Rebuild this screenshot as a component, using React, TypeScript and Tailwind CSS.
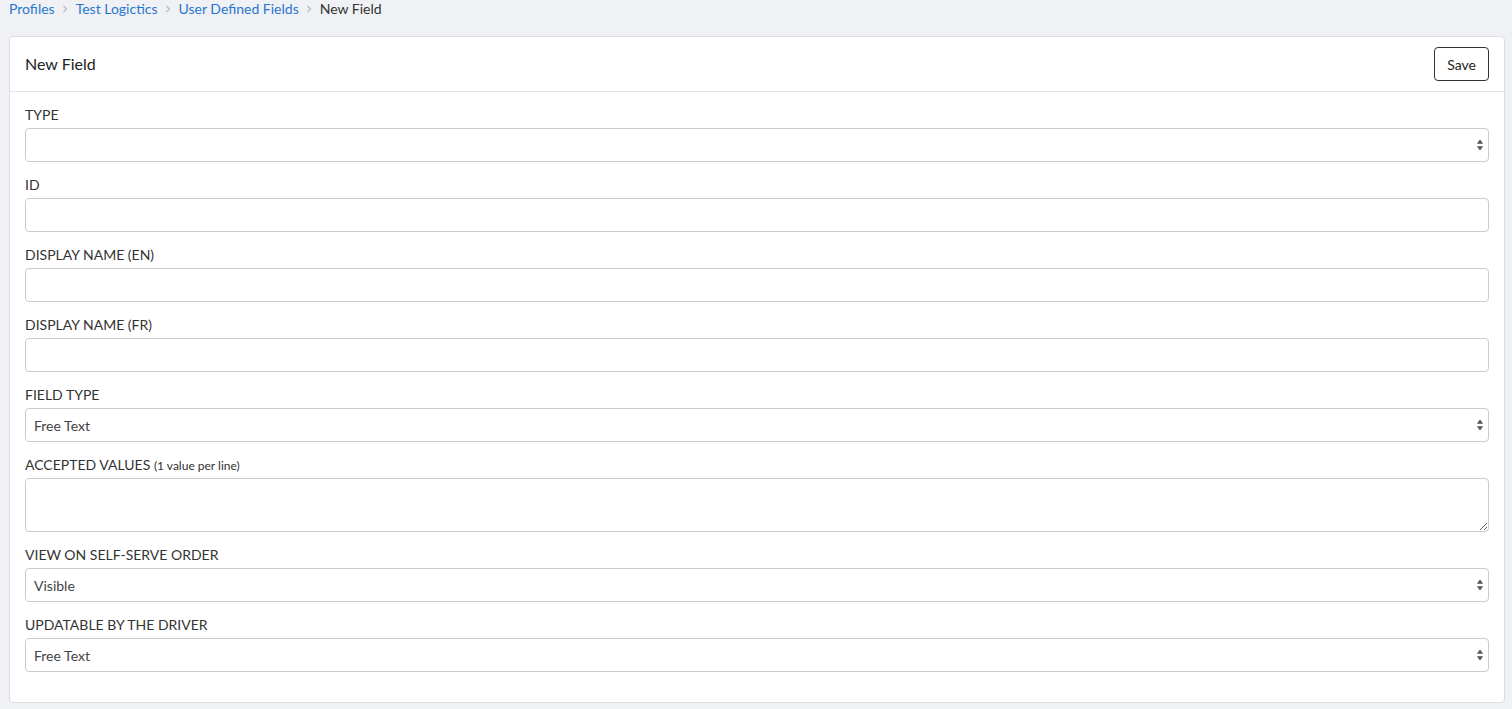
import type { ReactNode } from 'react';

function Chevron() {
  return (
    <svg width="8" height="8" viewBox="0 0 8 8" className="mx-[6.5px]">
      <path d="M2.5 1 L5.5 4 L2.5 7" fill="none" stroke="#b5b8bf" strokeWidth="1.1" />
    </svg>
  );
}

function SelectArrows() {
  return (
    <svg width="8" height="13" viewBox="0 0 8 13" className="absolute right-[4px] top-1/2 -translate-y-1/2 pointer-events-none">
      <path d="M4 1 L7.2 5.3 L0.8 5.3 Z" fill="#555" />
      <path d="M4 12 L7.2 7.7 L0.8 7.7 Z" fill="#555" />
    </svg>
  );
}

function Field({ label, children }: { label: ReactNode; children: ReactNode }) {
  return (
    <div className="mb-[13px]">
      <div className="h-5 leading-5 mb-[3px] text-[14px] text-[#333]">{label}</div>
      {children}
    </div>
  );
}

function Select({ value }: { value?: string }) {
  return (
    <div className="relative h-[34px] border border-[#cbcbcb] rounded-[4px] bg-white flex items-center px-[8px] text-[14px] text-[#444]">
      {value}
      <SelectArrows />
    </div>
  );
}

function Input() {
  return <input className="block w-full h-[34px] border border-[#cbcbcb] rounded-[4px] bg-white px-[8px] text-[14px] outline-none" />;
}

export default function App() {
  return (
    <div className="min-h-screen bg-[#f0f1f5] font-['Lato','Open_Sans',sans-serif] pb-[7px]">
      <div className="flex items-center h-[17px] pl-[9px] text-[14px] leading-[17px]">
        <a className="text-[#2877cf]">Profiles</a>
        <Chevron />
        <a className="text-[#2877cf]">Test Logictics</a>
        <Chevron />
        <a className="text-[#2877cf]">User Defined Fields</a>
        <Chevron />
        <span className="text-[#333]">New Field</span>
      </div>

      <div className="mt-[19px] ml-[9px] mr-[7px] bg-white border border-[#dcdde1] rounded-[4px]">
        <div className="flex items-center justify-between h-[55px] pl-[15px] pr-[15px] border-b border-[#e3e4e8]">
          <h1 className="text-[16px] text-[#222]">New Field</h1>
          <button className="h-[34px] px-[12px] border border-[#333] rounded-[4px] text-[14px] text-[#222] bg-white">Save</button>
        </div>

        <div className="px-[15px] pt-[13px] pb-[17px]">
          <Field label="TYPE">
            <Select />
          </Field>
          <Field label="ID">
            <Input />
          </Field>
          <Field label="DISPLAY NAME (EN)">
            <Input />
          </Field>
          <Field label="DISPLAY NAME (FR)">
            <Input />
          </Field>
          <Field label="FIELD TYPE">
            <Select value="Free Text" />
          </Field>
          <Field
            label={
              <>
                ACCEPTED VALUES <span className="text-[12px]">(1 value per line)</span>
              </>
            }
          >
            <textarea className="block w-full h-[54px] border border-[#cbcbcb] rounded-[4px] bg-white px-[8px] text-[14px] outline-none" />
          </Field>
          <Field label="VIEW ON SELF-SERVE ORDER">
            <Select value="Visible" />
          </Field>
          <Field label="UPDATABLE BY THE DRIVER">
            <Select value="Free Text" />
          </Field>
        </div>
      </div>
    </div>
  );
}
